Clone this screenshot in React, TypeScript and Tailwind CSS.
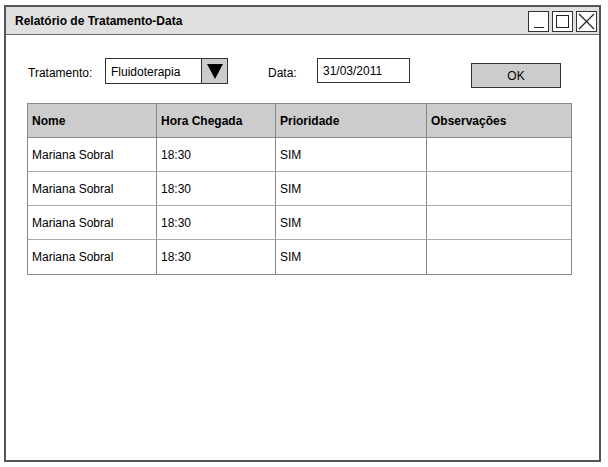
import React from "react";

const rows = [
  { nome: "Mariana Sobral", hora: "18:30", prioridade: "SIM", obs: "" },
  { nome: "Mariana Sobral", hora: "18:30", prioridade: "SIM", obs: "" },
  { nome: "Mariana Sobral", hora: "18:30", prioridade: "SIM", obs: "" },
  { nome: "Mariana Sobral", hora: "18:30", prioridade: "SIM", obs: "" },
];

const cols = ["w-[129px]", "w-[119px]", "w-[151px]", "flex-1"];

function WinButton({ children }: { children: React.ReactNode }) {
  return (
    <div className="w-[21px] h-[21px] border border-[#333] bg-white flex items-center justify-center">
      {children}
    </div>
  );
}

export default function App() {
  return (
    <div className="w-[608px] h-[467px] bg-white pt-[5px] pl-[4px] font-['Liberation_Sans',Arial,sans-serif] text-[12px] text-black">
      <div className="w-[597px] h-[457px] border-2 border-[#555] flex flex-col">
        {/* title bar */}
        <div className="h-[28px] bg-[#e0e0e0] border-b border-[#666] flex items-center pl-[9px] pr-[2px]">
          <span className="font-bold text-[12px] flex-1">Relatório de Tratamento-Data</span>
          <div className="flex gap-[3px] mt-[2px]">
            <WinButton>
              <div className="w-[10px] h-[1px] bg-[#222] mt-[12px]" />
            </WinButton>
            <WinButton>
              <div className="w-[13px] h-[13px] border border-[#222]" />
            </WinButton>
            <WinButton>
              <svg width="17" height="17" viewBox="0 0 17 17">
                <path d="M1 1 L16 16 M16 1 L1 16" stroke="#222" strokeWidth="1.2" />
              </svg>
            </WinButton>
          </div>
        </div>

        {/* form row */}
        <div className="flex items-start pt-[23px] pl-[22px]">
          <span className="mt-[6px] w-[77px]">Tratamento:</span>
          <div className="w-[123px] h-[26px] border border-[#333] flex bg-white">
            <span className="flex-1 pl-[5px] pt-[4px]">Fluidoterapia</span>
            <div className="w-[26px] bg-[#cccccc] border-l border-[#333] flex items-center justify-center">
              <svg width="18" height="18" viewBox="0 0 18 18">
                <path d="M1 2 L17 2 L9 17 Z" fill="#000" />
              </svg>
            </div>
          </div>
          <span className="mt-[6px] ml-[40px] w-[49px]">Data:</span>
          <div className="w-[93px] h-[25px] border border-[#333] bg-white pl-[5px] pt-[3px]">31/03/2011</div>
          <button className="mt-[5px] ml-[61px] w-[90px] h-[25px] border border-[#333] bg-[#cccccc] flex items-center justify-center text-[12px]">
            OK
          </button>
        </div>

        {/* table */}
        <div className="mt-[15px] ml-[21px] w-[545px] border border-[#888]">
          <div className="flex h-[34px] bg-[#cccccc] border-b border-[#888] font-bold">
            {["Nome", "Hora Chegada", "Prioridade", "Observações"].map((h, i) => (
              <div key={h} className={`${cols[i]} flex items-center pl-[4px] ${i < 3 ? "border-r border-[#888]" : ""}`}>
                {h}
              </div>
            ))}
          </div>
          {rows.map((r, idx) => (
            <div key={idx} className={`flex h-[34px] ${idx < rows.length - 1 ? "border-b border-[#aaa]" : ""}`}>
              {[r.nome, r.hora, r.prioridade, r.obs].map((c, i) => (
                <div key={i} className={`${cols[i]} flex items-center pl-[4px] ${i < 3 ? "border-r border-[#888]" : ""}`}>
                  {c}
                </div>
              ))}
            </div>
          ))}
        </div>
      </div>
    </div>
  );
}
